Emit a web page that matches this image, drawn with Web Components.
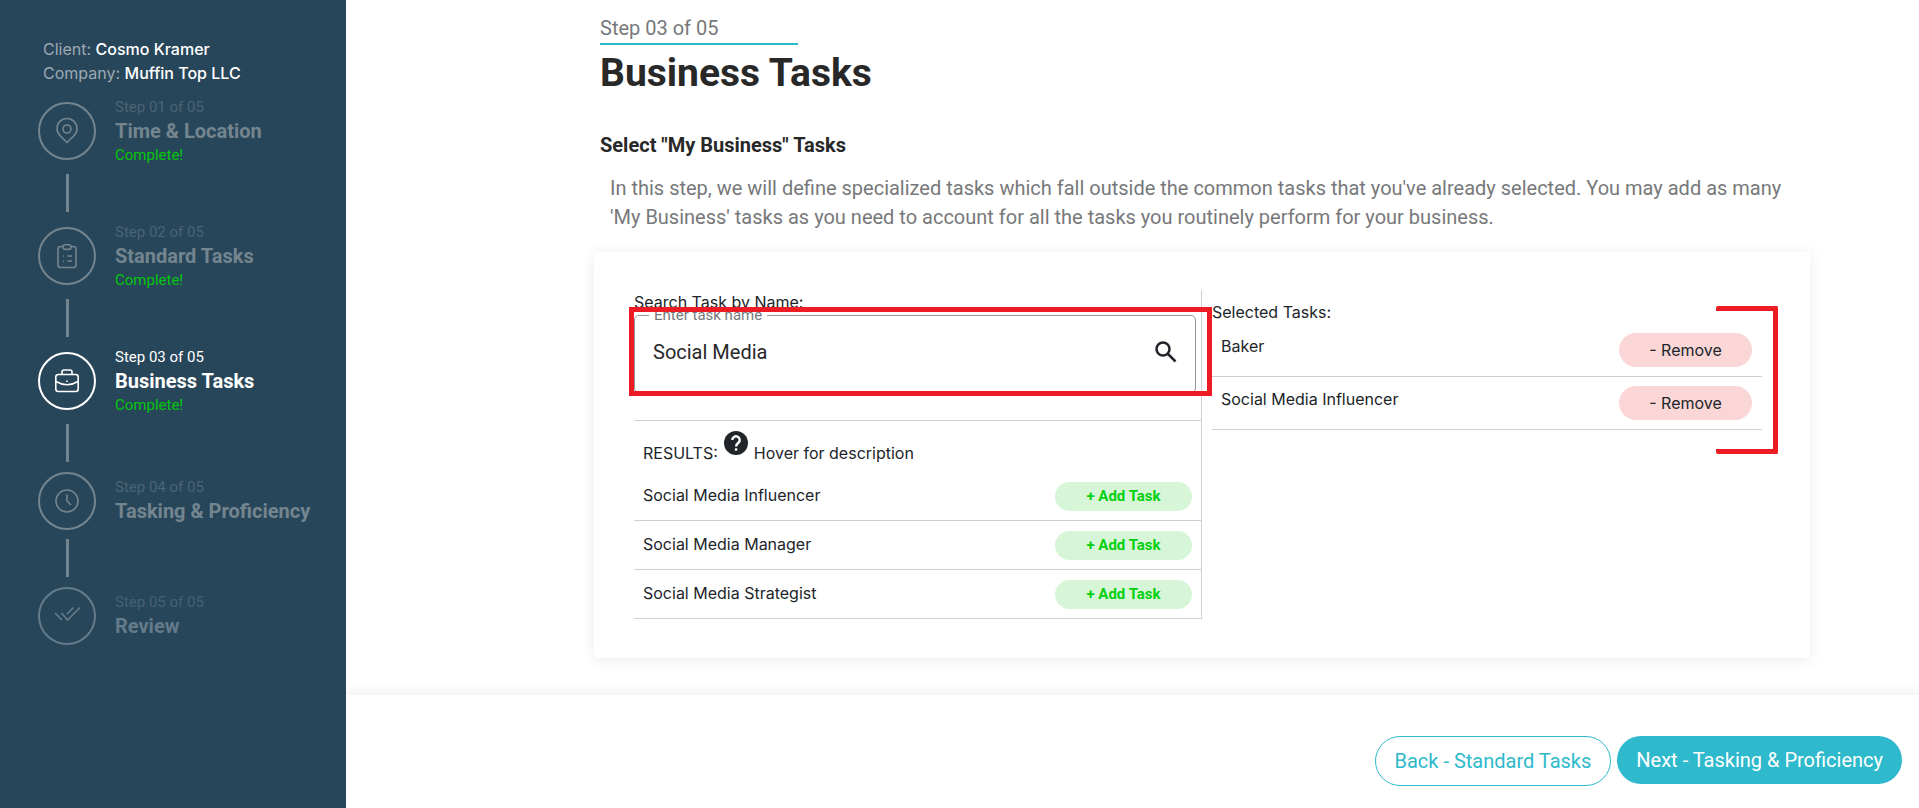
<!DOCTYPE html>
<html lang="en">
<head>
<meta charset="utf-8">
<title>Business Tasks</title>
<style>
  body {
    margin: 0;
    background: #fff;
    color: #212529;
    font: 16px/24px Inter, "Liberation Sans", sans-serif;
    --teal: #2eb9cc;
    --navy: #28465a;
    --line: #ced0d2;
    --red: #ed1c24;
    --heading-font: Roboto, "Liberation Sans", sans-serif;
  }
</style>
</head>
<body>
<wizard-layout>
  <client-sidebar slot="side" client="Cosmo Kramer" company="Muffin Top LLC">
    <wizard-step number="01" name="Time &amp; Location" icon="pin" complete></wizard-step>
    <wizard-step number="02" name="Standard Tasks" icon="clipboard" complete></wizard-step>
    <wizard-step number="03" name="Business Tasks" icon="briefcase" complete active></wizard-step>
    <wizard-step number="04" name="Tasking &amp; Proficiency" icon="clock"></wizard-step>
    <wizard-step number="05" name="Review" icon="checks"></wizard-step>
  </client-sidebar>

  <step-heading step="Step 03 of 05" name="Business Tasks" section='Select "My Business" Tasks'>
    In this step, we will define specialized tasks which fall outside the common tasks that you've already selected. You may add as many 'My Business' tasks as you need to account for all the tasks you routinely perform for your business.
  </step-heading>

  <task-card>
    <search-field slot="search" label="Enter task name" value="Social Media"></search-field>
    <task-row slot="results" name="Social Media Influencer" action="add"></task-row>
    <task-row slot="results" name="Social Media Manager" action="add"></task-row>
    <task-row slot="results" name="Social Media Strategist" action="add"></task-row>
    <task-row slot="selected" name="Baker" action="remove"></task-row>
    <task-row slot="selected" name="Social Media Influencer" action="remove"></task-row>
  </task-card>

  <wizard-footer slot="footer" back="Back - Standard Tasks" next="Next - Tasking &amp; Proficiency"></wizard-footer>
</wizard-layout>

<script>
class BaseElement extends HTMLElement {
  constructor() {
    super();
    this.attachShadow({ mode: "open" });
  }

  attr(name) {
    const span = document.createElement("span");
    span.textContent = this.getAttribute(name) || "";
    return span.innerHTML.replace(/"/g, "&quot;");
  }

  connectedCallback() {
    const template = document.createElement("template");
    template.innerHTML = `${this.getStyles()}${this.getTemplate()}`;
    this.shadowRoot.replaceChildren(template.content.cloneNode(true));
  }
}

class WizardLayout extends BaseElement {
  getTemplate() {
    return `
      <slot name="side"></slot>
      <div class="page">
        <main><slot></slot></main>
        <slot name="footer"></slot>
      </div>
    `;
  }

  getStyles() {
    return `
      <style>
        :host {
          display: flex;
          min-height: 100vh;
        }

        .page {
          flex: 1;
          min-width: 0;
          display: flex;
          flex-direction: column;
        }

        main {
          flex: 1;
          padding: 16px 109px 36px 248px;
        }
      </style>
    `;
  }
}

class ClientSidebar extends BaseElement {
  getTemplate() {
    return `
      <div class="client">
        <div>Client: <b>${this.attr("client")}</b></div>
        <div>Company: <b>${this.attr("company")}</b></div>
      </div>
      <nav aria-label="Steps"><slot></slot></nav>
    `;
  }

  getStyles() {
    return `
      <style>
        :host {
          display: block;
          position: relative;
          z-index: 1;
          box-sizing: border-box;
          flex: 0 0 346px;
          padding: 37px 24px 24px 38px;
          background: var(--navy);
          color: #9ba9b2;
        }

        .client {
          padding: 0 0 12px 5px;
        }

        b {
          color: #fff;
          font-weight: 500;
        }
      </style>
    `;
  }
}

const STEP_ICONS = {
  pin: `<path d="M12 23.5 5 16.6A10 10 0 1 1 19 16.6Z"/><circle cx="12" cy="10" r="4"/>`,
  clipboard: `<rect x="3" y="2.5" width="18" height="21" rx="2.5"/>
    <rect x="8" y=".8" width="8" height="4.6" rx="2.2" fill="var(--navy)"/>
    <path d="M8 12h1M12.5 12H17M8 17h1M12.5 17H17"/>`,
  briefcase: `<rect x=".8" y="5.5" width="22.4" height="17" rx="2.5"/>
    <path d="M7 5.5V3a2 2 0 0 1 2-2h6a2 2 0 0 1 2 2v2.5M1 12.5Q12 19 23 12.5M12 11.5v1.5"/>`,
  clock: `<circle cx="12" cy="12" r="11"/><path d="M12 5.5V12l4 4"/>`,
  checks: `<path d="M0 9l7 7M6.500 9l6 7L25 3.5M12 10l6.5-6.5"/>`
};

class WizardStep extends BaseElement {
  getTemplate() {
    const complete = this.hasAttribute("complete") ? `<div class="complete">Complete!</div>` : "";
    return `
      <div class="step">
        <div class="circle">
          <svg width="24" height="24" viewBox="0 0 24 24" aria-hidden="true">${STEP_ICONS[this.getAttribute("icon")]}</svg>
        </div>
        <div>
          <div class="number">Step ${this.attr("number")} of 05</div>
          <div class="name">${this.attr("name")}</div>
          ${complete}
        </div>
      </div>
      <div class="connector"></div>
    `;
  }

  getStyles() {
    return `
      <style>
        :host {
          display: block;
          font-family: var(--heading-font);
          --tone: #73858f;
          --faint: #4b6374;
        }

        :host([active]) {
          --tone: #fff;
          --faint: #fff;
        }

        :host(:last-child) {
          --tone: #647b8a;
          --faint: #456071;
        }

        .step {
          display: flex;
          align-items: center;
          gap: 19px;
        }

        .circle {
          box-sizing: border-box;
          display: grid;
          place-items: center;
          flex: none;
          width: 58px;
          height: 58px;
          border: 2px solid var(--tone);
          border-radius: 50%;
        }

        svg {
          overflow: visible;
          fill: none;
          stroke: var(--tone);
          stroke-width: 1.6;
        }

        .number,
        .complete {
          color: var(--faint);
          font-size: 15px;
          line-height: 20px;
        }

        .name {
          color: var(--tone);
          font-size: 20px;
          font-weight: 700;
          line-height: 28px;
          white-space: nowrap;
        }

        .complete {
          color: #04c50d;
        }

        .connector {
          width: 3px;
          height: 38px;
          margin: 9px 0 10px 28px;
          background: #73858f;
        }

        :host(:last-child) .connector {
          display: none;
        }
      </style>
    `;
  }
}

class StepHeading extends BaseElement {
  getTemplate() {
    return `
      <header>
        <div class="step">${this.attr("step")}</div>
        <h1>${this.attr("name")}</h1>
        <h2>${this.attr("section")}</h2>
      </header>
      <p><slot></slot></p>
    `;
  }

  getStyles() {
    return `
      <style>
        :host {
          display: block;
          padding: 0 14px 20px 6px;
          color: #77787a;
          font-family: var(--heading-font);
        }

        .step {
          width: 198px;
          padding-bottom: 3px;
          border-bottom: 2px solid var(--teal);
          font-size: 20px;
          line-height: 24px;
        }

        h1,
        h2 {
          margin: 0;
          color: #282829;
        }

        h1 {
          padding-top: 4px;
          font-size: 39px;
          line-height: 48px;
        }

        h2 {
          padding-top: 36px;
          font-size: 20px;
          line-height: 24px;
        }

        p {
          margin: 0;
          padding: 17px 0 0 10px;
          font-size: 20px;
          line-height: 29px;
        }
      </style>
    `;
  }
}

class TaskCard extends BaseElement {
  getTemplate() {
    return `
      <section class="find">
        <div class="search">
          <div>Search Task by Name:</div>
          <slot name="search"></slot>
        </div>
        <div class="hint">
          <span>RESULTS:</span>
          <svg width="24" height="24" viewBox="0 0 24 24" aria-hidden="true">
            <circle cx="12" cy="12" r="12" fill="#212529"/>
            <path d="M8.3 9a3.7 3.7 0 1 1 6.2 2.7C13.2 12.9 12.1 13.4 12.1 15.5" fill="none" stroke="#fff" stroke-width="2.4"/>
            <path d="M10.9 17.3h2.4v2.4h-2.4z" fill="#fff"/>
          </svg>
          <span>Hover for description</span>
        </div>
        <slot name="results"></slot>
      </section>
      <section class="picked">
        <div>Selected Tasks:</div>
        <slot name="selected"></slot>
        <div class="bracket"></div>
      </section>
    `;
  }

  getStyles() {
    return `
      <style>
        :host {
          display: grid;
          grid-template-columns: 568px minmax(0, 1fr);
          column-gap: 10px;
          padding: 38px 48px 39px 40px;
          background: #fff;
          box-shadow: 0 2px 14px rgba(0, 0, 0, 0.08);
        }

        .find {
          border-right: 1px solid var(--line);
        }

        .search {
          padding: 0 5px 27px 0;
          border-bottom: 1px solid var(--line);
        }

        .hint {
          display: flex;
          align-items: flex-start;
          gap: 6px;
          height: 24px;
          padding: 10px 8px 17px 9px;
          white-space: nowrap;
        }

        .hint span {
          padding-top: 10px;
        }

        .hint svg {
          flex: none;
        }

        .picked {
          position: relative;
          padding-top: 10px;
        }

        .bracket {
          position: absolute;
          top: 16px;
          right: -16px;
          width: 57px;
          height: 138px;
          border: 5px solid var(--red);
          border-left: 0;
          border-radius: 2px;
        }
      </style>
    `;
  }
}

class SearchField extends BaseElement {
  getTemplate() {
    return `
      <fieldset>
        <legend><label for="task">${this.attr("label")}</label></legend>
        <input id="task" type="text" value="${this.attr("value")}">
        <button type="button" aria-label="Search">
          <svg width="22" height="22" viewBox="0 0 22 22" aria-hidden="true">
            <circle cx="8" cy="8" r="6.5"/>
            <path d="M13 13l7.5 7.5"/>
          </svg>
        </button>
      </fieldset>
      <div class="marker"></div>
    `;
  }

  getStyles() {
    return `
      <style>
        :host {
          display: block;
          position: relative;
          color: #77787a;
          font-family: var(--heading-font);
        }

        fieldset {
          display: flex;
          align-items: center;
          box-sizing: content-box;
          height: 73px;
          min-width: 0;
          margin: 0;
          padding: 0 18px 4px 14px;
          border: 1px solid #96989a;
          border-radius: 5px;
        }

        legend {
          height: 2px;
          padding: 0 5px;
          font-size: 15px;
          line-height: 2px;
        }

        input {
          flex: 1;
          min-width: 0;
          padding: 0 0 0 4px;
          border: 0;
          outline: 0;
          background: none;
          color: #282829;
          font: 20px/24px var(--heading-font);
        }

        button {
          display: grid;
          padding: 0;
          border: 0;
          background: none;
        }

        svg {
          fill: none;
          stroke: #212529;
          stroke-width: 2.5;
        }

        /* red highlight drawn over the field */
        .marker {
          position: absolute;
          inset: -7px -16px -3px -5px;
          border: 5px solid var(--red);
        }
      </style>
    `;
  }
}

class TaskRow extends BaseElement {
  getTemplate() {
    const text = this.getAttribute("action") === "add" ? "+ Add Task" : "- Remove";
    return `
      <span>${this.attr("name")}</span>
      <button type="button">${text}</button>
    `;
  }

  getStyles() {
    return `
      <style>
        :host {
          display: flex;
          align-items: center;
          justify-content: space-between;
          box-sizing: border-box;
          padding: 0 9px;
          border-bottom: 1px solid var(--line);
        }

        :host([action="add"]) {
          height: 49px;
        }

        :host([action="remove"]) {
          height: 53px;
          padding-right: 10px;
        }

        span {
          padding-bottom: 2px;
        }

        :host([action="remove"]) span {
          padding-bottom: 8px;
        }

        button {
          border: 0;
          color: inherit;
        }

        :host([action="add"]) button {
          width: 137px;
          height: 29px;
          border-radius: 15px;
          background: #d6f6d7;
          color: #04d010;
          font: 700 15px/20px var(--heading-font);
        }

        :host([action="remove"]) button {
          width: 133px;
          height: 34px;
          border-radius: 17px;
          background: #fad6d6;
          font: inherit;
        }
      </style>
    `;
  }
}

class WizardFooter extends BaseElement {
  getTemplate() {
    return `
      <footer>
        <button type="button" class="back">${this.attr("back")}</button>
        <button type="button" class="next">${this.attr("next")}</button>
      </footer>
    `;
  }

  getStyles() {
    return `
      <style>
        :host {
          display: block;
          background: #fff;
          box-shadow: 0 -2px 12px rgba(0, 0, 0, 0.08);
        }

        footer {
          display: flex;
          justify-content: flex-end;
          align-items: flex-start;
          gap: 6px;
          padding: 41px 17px 22px;
        }

        button {
          padding: 12px 19px;
          border: 0;
          border-radius: 25px;
          font: 20px/24px var(--heading-font);
        }

        .back {
          border: 1px solid var(--teal);
          background: #fff;
          color: var(--teal);
        }

        .next {
          background: var(--teal);
          color: #fff;
        }
      </style>
    `;
  }
}

customElements.define("wizard-layout", WizardLayout);
customElements.define("client-sidebar", ClientSidebar);
customElements.define("wizard-step", WizardStep);
customElements.define("step-heading", StepHeading);
customElements.define("task-card", TaskCard);
customElements.define("search-field", SearchField);
customElements.define("task-row", TaskRow);
customElements.define("wizard-footer", WizardFooter);
</script>
</body>
</html>
